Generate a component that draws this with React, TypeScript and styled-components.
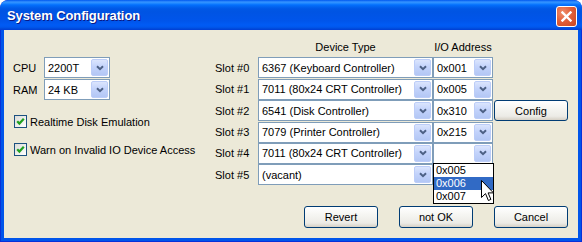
import * as React from 'react'
import styled, { createGlobalStyle } from 'styled-components'

interface Slot {
  name: string
  device: string
  address?: string
  open?: boolean
  config?: boolean
}

const slots: Slot[] = [
  { name: 'Slot #0', device: '6367 (Keyboard Controller)', address: '0x001' },
  { name: 'Slot #1', device: '7011 (80x24 CRT Controller)', address: '0x005' },
  { name: 'Slot #2', device: '6541 (Disk Controller)', address: '0x310', config: true },
  { name: 'Slot #3', device: '7079 (Printer Controller)', address: '0x215' },
  { name: 'Slot #4', device: '7011 (80x24 CRT Controller)', address: '', open: true },
  { name: 'Slot #5', device: '(vacant)' },
]

const popupItems = ['0x005', '0x006', '0x007']

const Chevron = () => (
  <svg width="8" height="6" viewBox="0 0 8 6">
    <path d="M1 1.2 L4 4.2 L7 1.2" fill="none" stroke="#4D6185" strokeWidth="2" />
  </svg>
)

const ComboBox: React.FC<{ value: string; children?: React.ReactNode }> = ({ value, children }) => (
  <Combo>
    <ComboValue>{value}</ComboValue>
    <DropButton>
      <Chevron />
    </DropButton>
    {children}
  </Combo>
)

const CheckBox: React.FC<{ label: string }> = ({ label }) => (
  <CheckRow>
    <Box>
      <svg width="9" height="9" viewBox="0 0 9 9">
        <path d="M1.2 4.2 L3.4 6.6 L7.8 1.8" fill="none" stroke="#21A121" strokeWidth="2.2" />
      </svg>
    </Box>
    <span>{label}</span>
  </CheckRow>
)

const App: React.FC = () => {
  return (
    <>
      <GlobalStyle />
      <Window>
        <TitleBar>
          <Title>System Configuration</Title>
          <CloseButton>
            <svg width="11" height="11" viewBox="0 0 11 11">
              <path d="M1.5 1.5 L9.5 9.5 M9.5 1.5 L1.5 9.5" stroke="#fff" strokeWidth="2.4" strokeLinecap="square" />
            </svg>
          </CloseButton>
        </TitleBar>
        <Frame>
          <Body>
            <LeftPanel>
              <PickerGrid>
                <FieldLabel>CPU</FieldLabel>
                <ComboBox value="2200T" />
                <FieldLabel>RAM</FieldLabel>
                <ComboBox value="24 KB" />
              </PickerGrid>
              <Checks>
                <CheckBox label="Realtime Disk Emulation" />
                <CheckBox label="Warn on Invalid IO Device Access" />
              </Checks>
            </LeftPanel>
            <SlotGrid>
              <span />
              <ColumnHead>Device Type</ColumnHead>
              <ColumnHead>I/O Address</ColumnHead>
              <span />
              {slots.map((slot) => (
                <React.Fragment key={slot.name}>
                  <SlotLabel>{slot.name}</SlotLabel>
                  <ComboBox value={slot.device} />
                  {slot.address !== undefined ? (
                    <ComboBox value={slot.address}>
                      {slot.open && (
                        <Popup>
                          {popupItems.map((item) => (
                            <PopupItem key={item} $selected={item === '0x006'}>
                              {item}
                            </PopupItem>
                          ))}
                          <Cursor width="13" height="22" viewBox="0 0 13 22">
                            <path
                              d="M0.5 0.5 L0.5 17.5 L4.5 13.6 L7.4 20.5 L9.9 19.4 L7.1 12.9 L12.5 12.9 Z"
                              fill="#fff"
                              stroke="#000"
                              strokeWidth="1"
                              strokeLinejoin="miter"
                            />
                          </Cursor>
                        </Popup>
                      )}
                    </ComboBox>
                  ) : (
                    <span />
                  )}
                  {slot.config ? <ConfigButton>Config</ConfigButton> : <span />}
                </React.Fragment>
              ))}
            </SlotGrid>
            <Footer>
              <Button>Revert</Button>
              <Button>not OK</Button>
              <Button>Cancel</Button>
            </Footer>
          </Body>
        </Frame>
      </Window>
    </>
  )
}

export default App

// Styles
const GlobalStyle = createGlobalStyle`
  html, body {
    margin: 0;
    padding: 0;
    background: #fff;
  }
  body {
    font-family: 'Liberation Sans', Arial, sans-serif;
    font-size: 11px;
    color: #000;
  }
`

const Window = styled.div`
  width: 582px;
  height: 242px;
  box-sizing: border-box;
  display: flex;
  flex-direction: column;
  border-radius: 8px 8px 0 0;
  overflow: hidden;
  background: #0831d9;
  padding: 0 1px 1px;
`

const TitleBar = styled.div`
  height: 30px;
  flex-shrink: 0;
  display: flex;
  align-items: center;
  justify-content: space-between;
  margin: 0 -1px;
  padding: 0 5px 0 7px;
  border-radius: 8px 8px 0 0;
  background: linear-gradient(
    180deg,
    #0058ee 0px,
    #3593ff 2px,
    #288eff 3px,
    #127dff 4px,
    #036ffc 5px,
    #0262ee 7px,
    #0057e5 9px,
    #0054e3 12px,
    #0055eb 21px,
    #005bf5 25px,
    #0058ee 27px,
    #0047d8 29px,
    #003dd7 30px
  );
`

const Title = styled.span`
  color: #fff;
  font-weight: bold;
  font-size: 13px;
  text-shadow: 1px 1px 0 #0a1883;
  letter-spacing: -0.1px;
`

const CloseButton = styled.div`
  width: 21px;
  height: 21px;
  box-sizing: border-box;
  margin-top: 3px;
  border: 1px solid #fff;
  border-radius: 3px;
  display: flex;
  align-items: center;
  justify-content: center;
  background: radial-gradient(circle at 30% 30%, #f08f6b 0%, #e1603b 45%, #c9451f 100%);
`

const Frame = styled.div`
  flex: 1;
  display: flex;
  border: solid #0055ea;
  border-width: 0 3px 3px;
`

const Body = styled.div`
  flex: 1;
  display: grid;
  grid-template-columns: 211px auto;
  grid-template-rows: auto auto;
  align-content: start;
  padding: 10px 10px 0 0;
  background: #ece9d8;
`

const LeftPanel = styled.div`
  display: flex;
  flex-direction: column;
  padding: 17px 0 0 9px;
`

const PickerGrid = styled.div`
  display: grid;
  grid-template-columns: 23px 66px;
  grid-auto-rows: 21px;
  column-gap: 8px;
  row-gap: 1px;
  align-items: center;
`

const FieldLabel = styled.span`
  text-align: right;
`

const Checks = styled.div`
  display: flex;
  flex-direction: column;
  gap: 15px;
  margin-top: 15px;
  padding-left: 1px;
`

const CheckRow = styled.label`
  display: flex;
  align-items: center;
  gap: 3px;
  height: 13px;
  white-space: nowrap;
`

const Box = styled.span`
  width: 13px;
  height: 13px;
  box-sizing: border-box;
  border: 1px solid #1c5180;
  background: linear-gradient(135deg, #dcdcd7 0%, #ffffff 100%);
  display: flex;
  align-items: center;
  justify-content: center;
`

const SlotGrid = styled.div`
  display: grid;
  grid-template-columns: 43px 175px 60px 75px;
  grid-template-rows: 17px;
  grid-auto-rows: 21px;
  row-gap: 0.4px;
  align-items: center;
`

const ColumnHead = styled.span`
  align-self: start;
  text-align: center;
  line-height: 14px;
`

const SlotLabel = styled.span`
  white-space: nowrap;
`

const Combo = styled.div`
  position: relative;
  height: 21px;
  box-sizing: border-box;
  display: flex;
  align-items: stretch;
  border: 1px solid #7f9db9;
  background: #fff;
`

const ComboValue = styled.span`
  flex: 1;
  display: flex;
  align-items: center;
  padding-left: 3px;
  white-space: nowrap;
  overflow: hidden;
`

const DropButton = styled.span`
  width: 17px;
  margin: 1px;
  box-sizing: border-box;
  border: 1px solid #bccdf8;
  border-radius: 2px;
  display: flex;
  align-items: center;
  justify-content: center;
  background: linear-gradient(180deg, #dbe5fd 0%, #c3d3fb 45%, #b3c7f5 100%);
`

const Popup = styled.div`
  position: absolute;
  left: -1px;
  top: 100%;
  width: 61px;
  box-sizing: border-box;
  border: 1px solid #000;
  background: #fff;
  z-index: 2;
`

const PopupItem = styled.div<{ $selected?: boolean }>`
  height: 13px;
  line-height: 13px;
  padding-left: 2px;
  background: ${(p) => (p.$selected ? '#316ac5' : '#fff')};
  color: ${(p) => (p.$selected ? '#fff' : '#000')};
`

const Cursor = styled.svg`
  position: absolute;
  left: 47px;
  top: 16px;
`

const Button = styled.button`
  width: 74px;
  height: 22px;
  padding: 0;
  box-sizing: border-box;
  border: 1px solid #003c74;
  border-radius: 3px;
  font: inherit;
  color: #000;
  background: linear-gradient(180deg, #ffffff 0%, #f4f4f0 45%, #ecebe6 80%, #d6d0c5 100%);
`

const ConfigButton = styled(Button)`
  margin-left: 1px;
  height: 21px;
`

const Footer = styled.div`
  grid-column: 1 / -1;
  display: flex;
  justify-content: flex-end;
  gap: 21px;
  margin-top: 21px;
`
